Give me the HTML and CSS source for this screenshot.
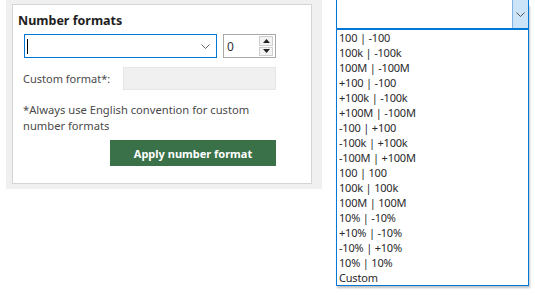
FILE: index.html
```html
<!DOCTYPE html>
<html lang="en">
<head>
    <meta charset="UTF-8">
    <title>Number formats</title>
    <link rel="stylesheet" href="styles.css">
</head>
<body>
    <div class="page">
        <div class="panel">
            <div class="card">
                <h1>Number formats</h1>
                <div class="row">
                    <div class="combo">
                        <span class="caret"></span>
                        <svg class="chevron" width="9" height="5" viewBox="0 0 9 5"><path d="M0.5 0.5 L4.5 4.5 L8.5 0.5" fill="none" stroke="#666" stroke-width="1"/></svg>
                    </div>
                    <div class="spin">
                        <span class="value">0</span>
                        <div class="spin-btns">
                            <div class="spin-btn"><svg width="7" height="4" viewBox="0 0 7 4"><path d="M0 4 L3.5 0 L7 4 Z" fill="#222"/></svg></div>
                            <div class="spin-btn"><svg width="7" height="4" viewBox="0 0 7 4"><path d="M0 0 L3.5 4 L7 0 Z" fill="#222"/></svg></div>
                        </div>
                    </div>
                </div>
                <div class="row custom">
                    <label>Custom format*:</label>
                    <div class="field"></div>
                </div>
                <p class="note">*Always use English convention for custom number formats</p>
                <div class="actions">
                    <button class="apply">Apply number format</button>
                </div>
            </div>
        </div>

        <div class="dropdown">
            <div class="dd-head">
                <div class="dd-btn">
                    <svg width="9" height="5" viewBox="0 0 9 5"><path d="M0.5 0.5 L4.5 4.5 L8.5 0.5" fill="none" stroke="#555" stroke-width="1"/></svg>
                </div>
            </div>
            <ul class="dd-list">
                <li>100 | -100</li>
                <li>100k | -100k</li>
                <li>100M | -100M</li>
                <li>+100 | -100</li>
                <li>+100k | -100k</li>
                <li>+100M | -100M</li>
                <li>-100 | +100</li>
                <li>-100k | +100k</li>
                <li>-100M | +100M</li>
                <li>100 | 100</li>
                <li>100k | 100k</li>
                <li>100M | 100M</li>
                <li>10% | -10%</li>
                <li>+10% | -10%</li>
                <li>-10% | +10%</li>
                <li>10% | 10%</li>
                <li>Custom</li>
            </ul>
        </div>
    </div>
</body>
</html>
```

FILE: styles.css
```css
* {
    margin: 0;
    padding: 0;
    box-sizing: border-box;
    font-family: "Noto Sans", "Open Sans", sans-serif;
}

body {
    background: #fff;
    width: 535px;
    height: 295px;
    overflow: hidden;
}

.page {
    display: flex;
    gap: 14px;
    padding-left: 6px;
}

.panel {
    width: 316px;
    height: 189px;
    background: #f0f0f0;
    padding: 4px 10px 5px 6px;
}

.card {
    height: 180px;
    background: #fff;
    border: 1px solid #d4d4d4;
    padding: 7px 0 0 10px;
}

.card h1 {
    font-size: 12.5px;
    font-weight: 700;
    color: #1e1e1e;
    line-height: 18px;
    margin-left: -5px;
}

.row {
    display: flex;
    align-items: center;
    gap: 6px;
}

.row:first-of-type {
    margin-top: 4px;
    margin-left: 1px;
}

.combo {
    position: relative;
    width: 193px;
    height: 24px;
    border: 1px solid #0078d7;
    display: flex;
    align-items: center;
    padding-left: 2px;
}

.caret {
    width: 1px;
    height: 15px;
    background: #000;
}

.chevron {
    position: absolute;
    right: 6px;
    top: 9px;
}

.spin {
    width: 53px;
    height: 24px;
    border: 1px solid #a8a8a8;
    display: flex;
    align-items: center;
    justify-content: space-between;
    padding: 1px 2px 1px 3px;
}

.spin .value {
    font-size: 12px;
    color: #333;
}

.spin-btns {
    display: flex;
    flex-direction: column;
    gap: 1px;
    height: 100%;
}

.spin-btn {
    width: 14px;
    flex: 1;
    background: #f3f3f3;
    border: 1px solid #cfcfcf;
    display: flex;
    align-items: center;
    justify-content: center;
}

.custom {
    margin-top: 9px;
    gap: 0;
}

.custom label {
    font-size: 11px;
    color: #4a4a4a;
    width: 100px;
    white-space: nowrap;
}

.field {
    width: 153px;
    height: 23px;
    background: #f0f0f0;
    border: 1px solid #e6e6e6;
}

.note {
    margin-top: 12px;
    font-size: 11.2px;
    line-height: 16px;
    color: #4a4a4a;
    width: 245px;
}

.actions {
    display: flex;
    justify-content: flex-end;
    width: 253px;
    margin-top: 6px;
}

.apply {
    width: 166px;
    height: 26px;
    border: 0;
    background: #3a7149;
    color: #fff;
    font-size: 11px;
    font-weight: 700;
}

.dropdown {
    width: 193px;
    box-shadow: 1px 2px 2px rgba(0, 0, 0, 0.25);
    margin-top: 4px;
    height: 282px;
}

.dd-head {
    border-left: 1px solid #0078d7;
    border-right: 1px solid #0078d7;
    border-bottom: 2px solid #0078d7;
    display: flex;
    justify-content: flex-end;
    margin-top: -4px;
    height: 30px;
    background: #fff;
}

.dd-btn {
    width: 16px;
    background: #cce4f7;
    border-left: 1px solid #7eb4ea;
    display: flex;
    align-items: center;
    justify-content: center;
}

.dd-list {
    list-style: none;
    border: 1px solid #0078d7;
    border-top: 0;
    background: #fff;
    padding: 0 0 0 2px;
}

.dd-list li {
    font-size: 11px;
    line-height: 15px;
    letter-spacing: -0.2px;
    color: #2a2a2a;
}
```
